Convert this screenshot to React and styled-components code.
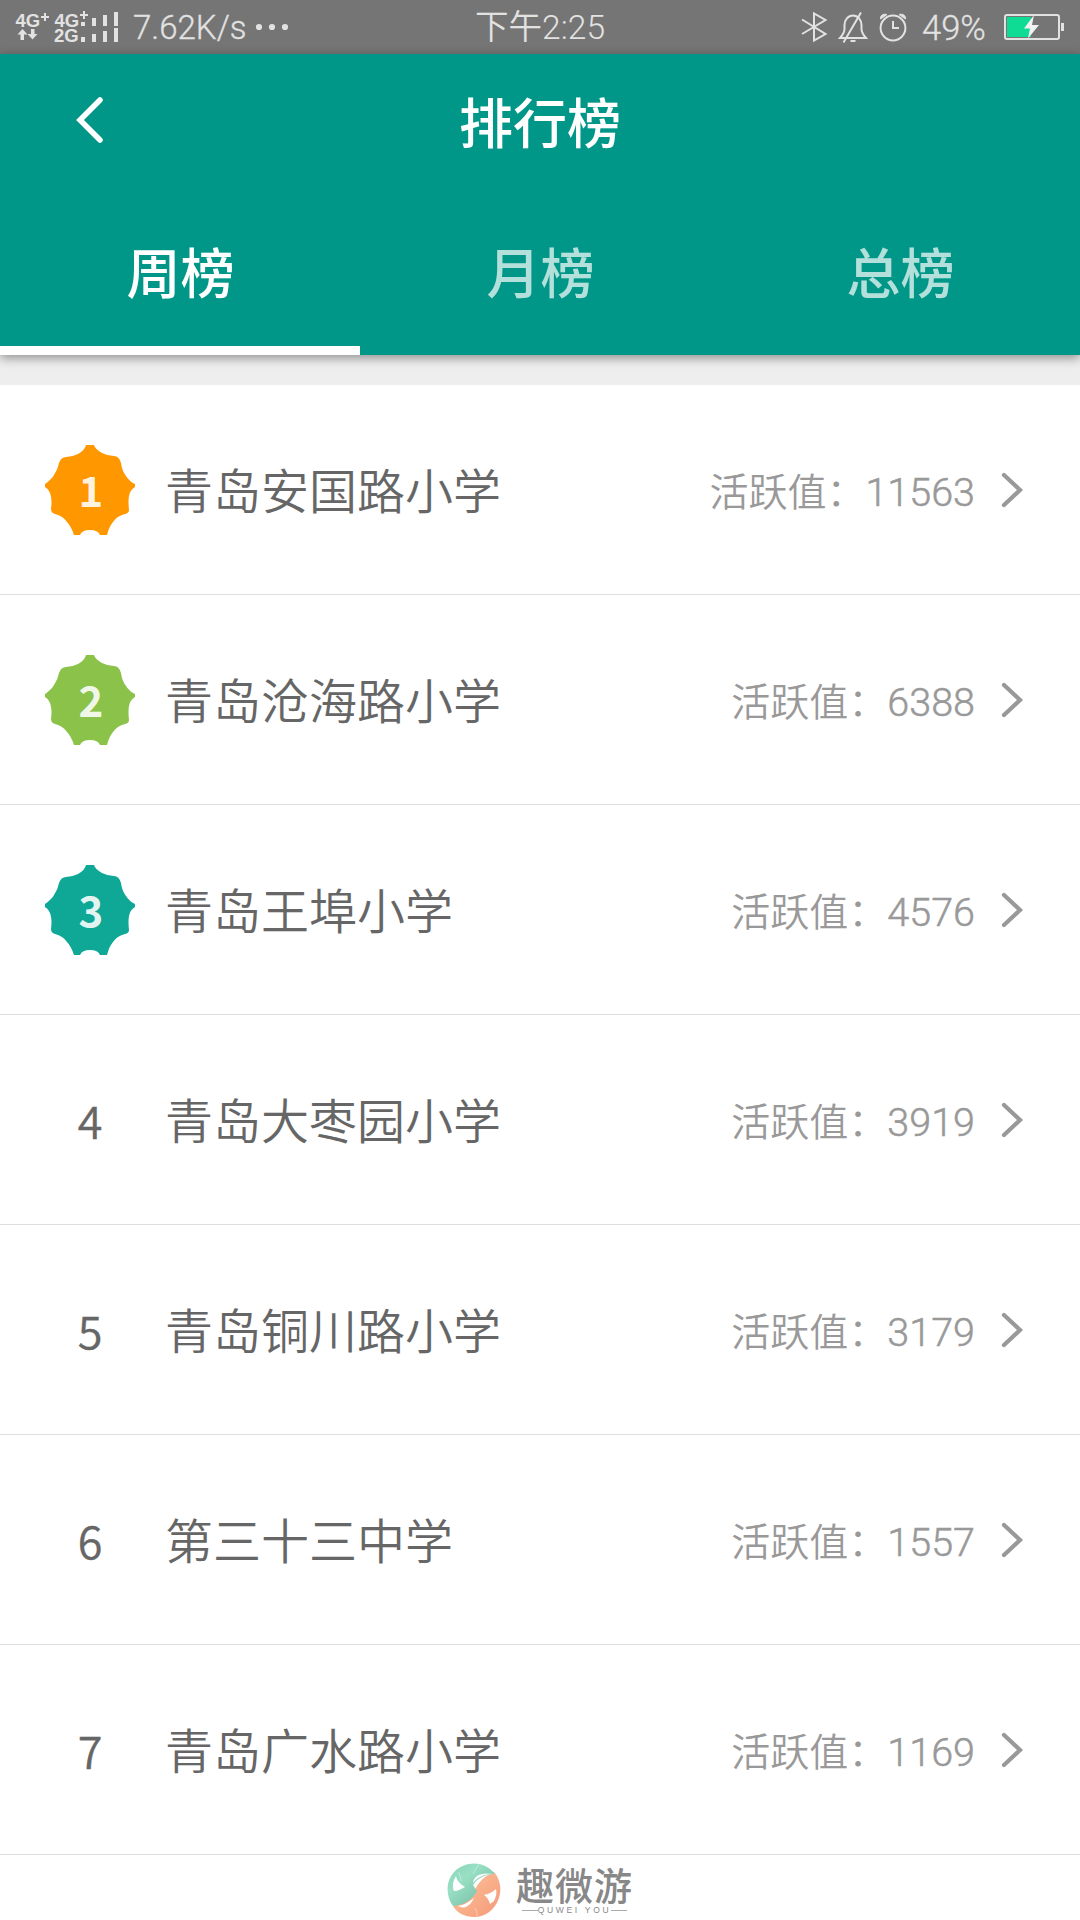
import React, { useState } from 'react';
import styled, { createGlobalStyle, ThemeProvider } from 'styled-components';

const theme = {
  colors: {
    primary: '#009688',
    status: '#757575',
    statusText: '#e2e2e2',
    white: '#ffffff',
    background: '#eeeeee',
    text: '#666666',
    muted: '#999999',
    line: '#dddddd',
    charge: '#0fdc94',
  },
  font: {
    S: '39px',
    M: '48px',
    L: '54px',
  },
};

const tabs = ['周榜', '月榜', '总榜'];

const schools = [
  { name: '青岛安国路小学', score: 11563, color: '#ff9800' },
  { name: '青岛沧海路小学', score: 6388, color: '#8bc34a' },
  { name: '青岛王埠小学', score: 4576, color: '#0fa896' },
  { name: '青岛大枣园小学', score: 3919 },
  { name: '青岛铜川路小学', score: 3179 },
  { name: '第三十三中学', score: 1557 },
  { name: '青岛广水路小学', score: 1169 },
];

const SignalIcon = () => (
  <svg width="120" height="54" viewBox="0 0 120 54" fill="currentColor">
    <g fontFamily="Liberation Sans, sans-serif" fontWeight="700" fontSize="18.5">
      <text x="15.500" y="27">4G</text>
      <text x="54.500" y="26.500">4G</text>
      <text x="54" y="42">2G</text>
    </g>
    <path d="M41 16h3v-3h2v3h3v2h-3v3h-2v-3h-3zM80 14h3v-3h2v3h3v2h-3v3h-2v-3h-3z" />
    <path d="M22.500 29l5 5.500h-3.500v5.500h-3.500v-5.500h-3zM32.500 39.500l-5-5.500h3.500v-5h3.500v5h3z" />
    <path d="M81 22h4v4h-4zM92 18h4v8h-4zM103 15h4v11h-4zM114 12h4v14h-4zM81 37h4v5h-4zM92 34h4v8h-4zM103 31h4v11h-4zM114 28h4v14h-4z" />
  </svg>
);

const DotsIcon = () => (
  <svg width="34" height="54" viewBox="0 0 34 54" fill="currentColor">
    <circle cx="4" cy="27" r="3.100" />
    <circle cx="17" cy="27" r="3.100" />
    <circle cx="30" cy="27" r="3.100" />
  </svg>
);

const StatusIcons = () => (
  <svg width="110" height="54" viewBox="800 0 110 54" fill="none" stroke="currentColor" strokeWidth="2">
    <path d="M802 19.500l23.500 14.500L814 40.500v-27l11.500 6.500L802 34" />
    <path d="M840 38h26c-2.500-3-4.500-5-4.500-9v-4c0-5-3.500-9.500-8.500-9.500s-8.500 4.500-8.500 9.500v4c0 4-2 6-4.500 9z" />
    <path d="M850.500 41h5M861 12.500l-17.500 30" />
    <circle cx="893" cy="28" r="12.400" />
    <path d="M893 21v7h6" />
    <path d="M880.500 19c-.5-4 3-5.500 6.500-4.500zM905.500 19c.5-4-3-5.500-6.500-4.500z" fill="currentColor" strokeWidth="1" />
  </svg>
);

const BatteryIcon = () => (
  <svg width="60" height="54" viewBox="1004 0 60 54">
    <rect x="1005" y="15" width="54" height="24" rx="2" fill="none" stroke="currentColor" strokeWidth="2" />
    <path d="M1061 23h3v8h-3z" fill="currentColor" />
    <path d="M1007 17h24v20h-24z" fill={theme.colors.charge} />
    <path d="M1034 15l-10 13.500h6l-2 10 11-13.500h-7z" fill="#f2f2f2" />
  </svg>
);

const BackIcon = () => (
  <svg width="32" height="50" viewBox="0 0 32 50" fill="none" stroke="currentColor" strokeWidth="5.500" strokeLinecap="round">
    <path d="M26 5L6 25l20 20" />
  </svg>
);

const ArrowIcon = () => (
  <svg width="24" height="36" viewBox="0 0 24 36" fill="none" stroke="currentColor" strokeWidth="4.200" strokeLinecap="round">
    <path d="M4 3l16 15L4 33" />
  </svg>
);

const Badge = ({ color, rank }) => (
  <svg width="90" height="90" viewBox="0 0 90 90">
    <path
      fill={color}
      d="M41 0h8q1 4 8 8 6 3 12 3 5 0 7 7 1 8 5 13 3 5 9 8v3q-5 3-6 9-1 5 0 14 0 3-4 4-8 2-12 8-4 5-6 13h-7q-2-5-10-5t-10 5h-6q-3-9-7-13-4-6-12-8-4-1-4-5 1-8 0-12-1-7-6-10v-3q7-5 9-9 4-6 5-12 2-6 7-6 6 0 12-3 7-4 8-9z"
    />
    <text x="46" y="61.500" fill="#fff" fillOpacity="0.9" fontFamily="Noto Sans CJK SC, sans-serif" fontWeight="700" fontSize="42" textAnchor="middle">
      {rank}
    </text>
  </svg>
);

const LogoIcon = () => (
  <svg width="54" height="54" viewBox="0 0 54 54">
    <defs>
      <linearGradient id="mint" x1="0" y1="0" x2="1" y2="1">
        <stop offset="0" stopColor="#8ad6b8" />
        <stop offset="0.35" stopColor="#98dfc4" />
        <stop offset="1" stopColor="#6fb39b" />
      </linearGradient>
      <linearGradient id="peach" x1="0" y1="0" x2="1" y2="1">
        <stop offset="0" stopColor="#fdc79a" />
        <stop offset="1" stopColor="#f5987a" />
      </linearGradient>
    </defs>
    {/* lower right half, then the upper left half with the left ribbon over it */}
    <path fill="url(#peach)" d="M47 9C53 16 55 26 52 35 48 47 38 54 27 54 18 54 10 50 6 43l20-11c3-10 9-18 21-23z" />
    <path fill="url(#mint)" d="M6 43C-2 32-1 17 8 8 19-2 37-3 48 11 38 11 31 15 26 22l4 6c-5 9-13 14-24 15z" />
    <g fill="#fff">
      <path d="M9 13c1 5 4 8 9 11-4 2-7 4-11 4-2-5-1-10 2-15z" />
      <path d="M26 20c1-7 7-11 20-9-9 0-15 3-20 9z" />
      <path d="M37 32c5-1 9-3 12-6 1 4 0 8-2 12l-4 3c-1-4-3-7-6-9z" />
      <path d="M11 43c6-1 11-4 16-8-2 4-4 7-8 9-3 1-6 0-8-1z" />
    </g>
    <path fill="none" stroke="#fff" strokeWidth="0.6" opacity="0.6" d="M11 9c2 3 3 6 3 9M32 1l-6 10M28 45c2 3 2 5 2 8" />
  </svg>
);

const App = () => {
  const [active, setActive] = useState(0);

  return (
    <ThemeProvider theme={theme}>
      <GlobalStyle />
      <Screen>
        <StatusBar>
          <StatusGroup>
            <SignalIcon />
            <Speed>7.62K/s</Speed>
            <DotsIcon />
          </StatusGroup>
          <Time>下午2:25</Time>
          <StatusGroup $end>
            <StatusIcons />
            <Percent>49%</Percent>
            <BatteryIcon />
          </StatusGroup>
        </StatusBar>
        <Header>
          <TitleBar>
            <BackButton aria-label="返回">
              <BackIcon />
            </BackButton>
            <Title>排行榜</Title>
          </TitleBar>
          <Tabs>
            {tabs.map((tab, index) => (
              <Tab key={tab} $active={index === active} onClick={() => setActive(index)}>
                {tab}
              </Tab>
            ))}
          </Tabs>
        </Header>
        <List>
          {schools.map(({ name, score, color }, index) => (
            <Row key={name}>
              <Rank>{color ? <Badge color={color} rank={index + 1} /> : <span>{index + 1}</span>}</Rank>
              <Name>{name}</Name>
              <Label>活跃值：</Label>
              <Score>{score}</Score>
              <ArrowIcon />
            </Row>
          ))}
        </List>
        <Footer>
          <LogoIcon />
          <Brand>
            <BrandName>趣微游</BrandName>
            <BrandLatin>QUWEI YOU</BrandLatin>
          </Brand>
        </Footer>
      </Screen>
    </ThemeProvider>
  );
};

export default App;

const GlobalStyle = createGlobalStyle`
  *, *::before, *::after {
    box-sizing: border-box;
  }
  body {
    margin: 0;
    font-family: 'Noto Sans CJK SC', sans-serif;
  }
  svg {
    display: block;
    flex-shrink: 0;
  }
`;

const Screen = styled.div`
  width: 1080px;
  height: 1920px;
  display: flex;
  flex-direction: column;
  overflow: hidden;
  background-color: ${({ theme }) => theme.colors.background};
`;

const StatusBar = styled.div`
  height: 54px;
  flex-shrink: 0;
  display: grid;
  grid-template-columns: 1fr auto 1fr;
  align-items: center;
  color: ${({ theme }) => theme.colors.statusText};
  background-color: ${({ theme }) => theme.colors.status};
  font-family: Roboto, 'Noto Sans CJK SC', sans-serif;
  font-size: 33px;
  font-weight: 350;
  line-height: 54px;
  white-space: nowrap;
`;

const StatusGroup = styled.div`
  display: flex;
  height: 54px;
  justify-content: ${({ $end }) => ($end ? 'flex-end' : 'flex-start')};
  padding-right: ${({ $end }) => ($end ? '16px' : '0')};
`;

const Speed = styled.span`
  width: 122px;
  margin-left: 13px;
  padding-top: 1px;
  -webkit-text-stroke: 0.3px;
`;

const Time = styled.span`
  height: 54px;
  padding-top: 1px;
  font-size: 33.6px;
`;

const Percent = styled.span`
  width: 82px;
  margin-left: 12px;
  padding-top: 1px;
  font-size: 34.5px;
  -webkit-text-stroke: 0.3px;
`;

const Header = styled.header`
  height: 301px;
  flex-shrink: 0;
  display: flex;
  flex-direction: column;
  color: ${({ theme }) => theme.colors.white};
  background-color: ${({ theme }) => theme.colors.primary};
  box-shadow: 0 3px 10px rgba(0, 0, 0, 0.4);
  font-size: ${({ theme }) => theme.font.L};
  font-weight: 500;
`;

const TitleBar = styled.div`
  height: 134px;
  display: grid;
  grid-template-columns: 180px 1fr 180px;
  align-items: center;
`;

const BackButton = styled.button`
  display: flex;
  justify-content: center;
  padding: 0 0 2px;
  border: none;
  color: inherit;
  background: none;
`;

const Title = styled.h1`
  margin: 0;
  font-size: inherit;
  font-weight: inherit;
  line-height: 134px;
  text-align: center;
`;

const Tabs = styled.nav`
  flex-grow: 1;
  display: grid;
  grid-template-columns: repeat(3, 1fr);
`;

const Tab = styled.button`
  padding: 6px 0 0 1px;
  border: none;
  border-bottom: 9px solid ${({ theme, $active }) => ($active ? theme.colors.white : 'transparent')};
  color: ${({ theme, $active }) => ($active ? theme.colors.white : 'rgba(255, 255, 255, 0.7)')};
  background: none;
  font: inherit;
`;

const List = styled.ul`
  margin: 30px 0 0;
  padding: 0;
  list-style: none;
  background-color: ${({ theme }) => theme.colors.white};
`;

const Row = styled.li`
  height: 210px;
  display: flex;
  align-items: center;
  padding: 0 56px 0 45px;
  border-bottom: 1px solid ${({ theme }) => theme.colors.line};
  color: ${({ theme }) => theme.colors.muted};
`;

const Rank = styled.div`
  width: 90px;
  display: flex;
  justify-content: center;
  margin-right: 30px;
  color: ${({ theme }) => theme.colors.text};
  font-size: 45px;
  font-weight: 350;
  span {
    padding-bottom: 1px;
    -webkit-text-stroke: 0.4px;
  }
`;

const Name = styled.span`
  flex-grow: 1;
  padding-bottom: 3px;
  color: ${({ theme }) => theme.colors.text};
  font-size: ${({ theme }) => theme.font.M};
  font-weight: 350;
`;

const Label = styled.span`
  padding-bottom: 1px;
  font-size: ${({ theme }) => theme.font.S};
  font-weight: 350;
`;

const Score = styled.span`
  margin-right: 25px;
  padding-top: 6px;
  font-family: Roboto, sans-serif;
  font-size: 39.5px;
  font-weight: 300;
  -webkit-text-stroke: 0.5px;
`;

const Footer = styled.footer`
  flex-grow: 1;
  display: flex;
  align-items: center;
  justify-content: center;
  gap: 15px;
  padding-top: 5px;
  background-color: ${({ theme }) => theme.colors.white};
`;

const Brand = styled.div`
  display: flex;
  flex-direction: column;
  align-items: center;
  color: #888888;
`;

const BrandName = styled.span`
  font-size: 38px;
  font-weight: 500;
  line-height: 38px;
  letter-spacing: 1px;
`;

const BrandLatin = styled.span`
  display: flex;
  align-items: center;
  padding-top: 2px;
  font-family: 'Liberation Sans', sans-serif;
  font-size: 8.5px;
  line-height: 10px;
  letter-spacing: 2.7px;
  white-space: nowrap;
  &::before,
  &::after {
    content: '';
    width: 16px;
    height: 1px;
    background-color: #aaaaaa;
  }
`;
